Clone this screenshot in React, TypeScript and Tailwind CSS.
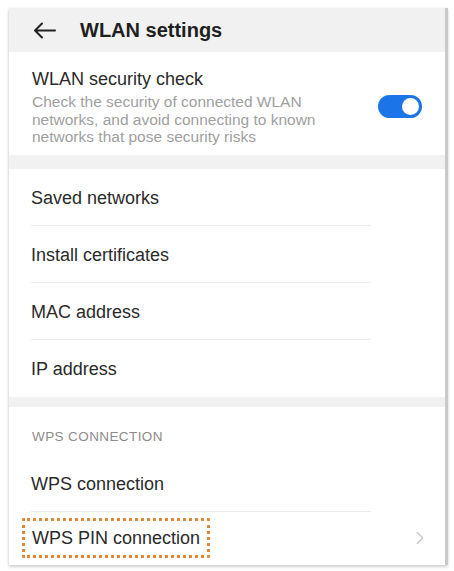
import { ChevronRight } from 'lucide-react'

const font = { fontFamily: '"Liberation Sans", Arial, Helvetica, sans-serif' }

function Row({ label, last, boxed }: { label: string; last?: boolean; boxed?: boolean }) {
  return (
    <div className="relative flex items-center h-[57px] pl-[22px] pr-[14px]">
      {boxed ? (
        <span className="-ml-[9px] px-[7px] py-[6px] border-[3px] border-dotted border-[#e2863a] rounded-[2px] text-[18px] leading-[22px] text-[#2a2a2a]">
          {label}
        </span>
      ) : (
        <span className="text-[18px] leading-[22px] text-[#2a2a2a]">{label}</span>
      )}
      {boxed && <ChevronRight className="ml-auto w-[22px] h-[22px] text-[#c8c8c8]" strokeWidth={1.5} />}
      {!last && <div className="absolute bottom-0 left-[22px] w-[340px] h-px bg-[#ececec]" />}
    </div>
  )
}

export default function App() {
  return (
    <div className="w-[454px] h-[571px] bg-white pt-[8px] pl-[9px]" style={font}>
      <div className="w-[439px] bg-[#f1f1f1] border-r-[3px] border-[#c9c9c9] shadow-[0_2px_3px_rgba(0,0,0,0.18),-1px_0_2px_rgba(0,0,0,0.06)]">
        {/* Header */}
        <div className="flex items-center h-[44px]">
          <svg className="ml-[24px]" width="23" height="17" viewBox="0 0 23 17" fill="none" stroke="#222" strokeWidth="2" strokeLinecap="round" strokeLinejoin="round">
            <path d="M22 8.5H2M9 1.5L2 8.5l7 7" />
          </svg>
          <span className="ml-[24px] text-[20px] font-bold text-[#1f1f1f]">WLAN settings</span>
        </div>

        {/* Security check */}
        <div className="bg-white h-[103px] pl-[23px] pr-[23px] pt-[16px] flex items-start">
          <div className="flex-1">
            <div className="text-[18px] leading-[22px] text-[#2a2a2a]">WLAN security check</div>
            <div className="mt-[3px] w-[300px] text-[15.5px] leading-[17.5px] text-[#a0a0a0]">
              Check the security of connected WLAN networks, and avoid connecting to known networks that pose security risks
            </div>
          </div>
          <div className="mt-[27px] w-[44px] h-[23px] rounded-full bg-[#1b74e8] flex items-center justify-end pr-[3px]">
            <div className="w-[17px] h-[17px] rounded-full bg-white" />
          </div>
        </div>

        <div className="h-[14px]" />

        {/* List */}
        <div className="bg-white">
          <Row label="Saved networks" />
          <Row label="Install certificates" />
          <Row label="MAC address" />
          <Row label="IP address" last />
        </div>

        <div className="h-[10px]" />

        {/* WPS */}
        <div className="bg-white">
          <div className="h-[50px] pl-[23px] pt-[22px] text-[13.5px] leading-[16px] tracking-[0.4px] text-[#8c8c8c]">
            WPS CONNECTION
          </div>
          <div className="-mt-[2px]">
            <Row label="WPS connection" />
          </div>
          <div className="-mt-[2px] h-[55px] flex flex-col justify-center">
            <Row label="WPS PIN connection" last boxed />
          </div>
        </div>
      </div>
    </div>
  )
}
